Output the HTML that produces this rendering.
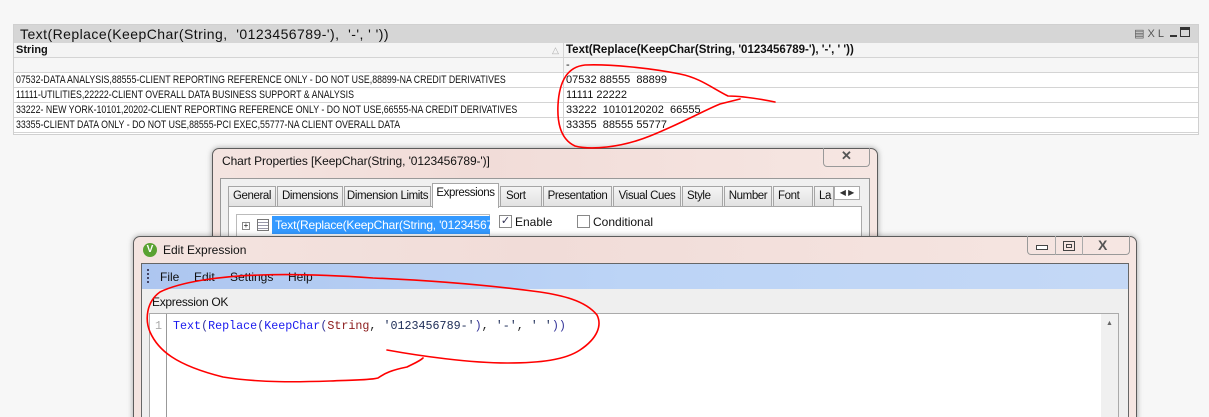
<!DOCTYPE html>
<html><head><meta charset="utf-8"><style>
*{box-sizing:border-box;margin:0;padding:0}
html,body{width:1209px;height:417px;overflow:hidden}
body{background:#f7f7f7;position:relative;font-family:"Liberation Sans",sans-serif;color:#111}
.a{position:absolute}
.tbl{left:13px;top:24px;width:1186px;height:111px;background:#fff;border:1px solid #d0d0d0}
.tt{left:0;top:0;width:100%;height:18px;background:#d6d6d6;font-size:14px;padding:1px 6px;letter-spacing:0.45px;white-space:nowrap}
.row{position:absolute;left:0;width:100%;height:15px;border-bottom:1px solid #d4d4d4;font-size:11px;line-height:15px}
.c1{position:absolute;left:2px;width:676px;white-space:nowrap;overflow:hidden;text-overflow:ellipsis;transform:scaleX(0.8);transform-origin:0 0}
.c2{position:absolute;left:552px;white-space:nowrap}
.dv{position:absolute;left:549px;top:18px;width:1px;height:92px;background:#d4d4d4}
.win{border:1px solid #5c5c5c;border-radius:7px 7px 0 0;background:linear-gradient(90deg,#f4e4e0,#f1dcd8 40%,#f6e6e2);box-shadow:0 0 6px rgba(0,0,0,.35)}
.tab{position:absolute;top:186px;height:21px;border:1px solid #a6a6a6;background:linear-gradient(#f5f5f5,#e2e2e2);font-size:11.5px;letter-spacing:-0.4px;line-height:19px;text-align:center;color:#111;white-space:nowrap;overflow:hidden}
.mono{font-family:"Liberation Mono",monospace;font-size:11.7px}
</style></head><body>

<div class="a tbl">
 <div class="a tt">Text(Replace(KeepChar(String,&nbsp; '0123456789-'),&nbsp; '-', ' '))</div>
 <div class="a" style="right:8px;top:2px;font-size:11px;color:#555;letter-spacing:3px">&#9636;XL<span style="display:inline-block;width:7px;border-bottom:2px solid #333;height:9px;margin:0 3px"></span><span style="display:inline-block;width:10px;height:10px;border:1px solid #333;border-top-width:3px"></span></div>
 <div class="row" style="top:18px;background:#f4f4f4;font-weight:bold"><span class="c1" style="transform:none">String</span><span style="position:absolute;left:538px;color:#aaa;font-weight:normal;font-size:9px">&#9651;</span><span class="c2" style="font-size:11.5px">Text(Replace(KeepChar(String, '0123456789-'), '-', ' '))</span></div>
 <div class="row" style="top:33px;background:#f6f6f6"><span class="c2">-</span></div>
 <div class="row" style="top:48px"><span class="c1">07532-DATA ANALYSIS,88555-CLIENT REPORTING REFERENCE ONLY - DO NOT USE,88899-NA CREDIT DERIVATIVES</span><span class="c2">07532 88555&nbsp; 88899</span></div>
 <div class="row" style="top:63px"><span class="c1">11111-UTILITIES,22222-CLIENT OVERALL DATA BUSINESS SUPPORT &amp; ANALYSIS</span><span class="c2">11111 22222</span></div>
 <div class="row" style="top:78px"><span class="c1">33222- NEW YORK-10101,20202-CLIENT REPORTING REFERENCE ONLY - DO NOT USE,66555-NA CREDIT DERIVATIVES</span><span class="c2">33222&nbsp; 1010120202&nbsp; 66555</span></div>
 <div class="row" style="top:93px"><span class="c1">33355-CLIENT DATA ONLY - DO NOT USE,88555-PCI EXEC,55777-NA CLIENT OVERALL DATA</span><span class="c2">33355&nbsp; 88555 55777</span></div>
 <div class="dv"></div>
</div>

<!-- Chart properties -->
<div class="a win" style="left:212px;top:148px;width:666px;height:100px"></div>
<div class="a" style="left:222px;top:154px;font-size:12px;letter-spacing:-0.1px">Chart Properties [KeepChar(String, '0123456789-')]</div>
<div class="a" style="left:823px;top:148px;width:47px;height:19px;border:1px solid #999;border-top:none;border-radius:0 0 4px 4px;font-size:13px;text-align:center;color:#555;font-weight:bold">&#10005;</div>
<div class="a" style="left:220px;top:178px;width:650px;height:70px;background:#f0f0f0;border:1px solid #999"></div>
<div class="a" style="left:228px;top:206px;width:634px;height:40px;background:#fff;border:1px solid #aaa"></div>
<div class="tab" style="left:228px;width:48px">General</div>
<div class="tab" style="left:277px;width:66px">Dimensions</div>
<div class="tab" style="left:344px;width:87px">Dimension Limits</div>
<div class="tab" style="left:432px;width:67px;top:183px;height:25px;background:#fff;border-bottom:none">Expressions</div>
<div class="tab" style="left:500px;width:42px;text-align:left;padding-left:5px">Sort</div>
<div class="tab" style="left:543px;width:69px">Presentation</div>
<div class="tab" style="left:613px;width:68px">Visual Cues</div>
<div class="tab" style="left:682px;width:41px;text-align:left;padding-left:4px">Style</div>
<div class="tab" style="left:724px;width:48px">Number</div>
<div class="tab" style="left:773px;width:40px;text-align:left;padding-left:4px">Font</div>
<div class="tab" style="left:814px;width:20px;text-align:left;padding-left:4px">La</div>
<div class="a" style="left:834px;top:186px;width:26px;height:14px;border:1px solid #aaa;background:#fff;font-size:8px;line-height:12px;text-align:center;color:#333">&#9664;&nbsp;&#9654;</div>
<div class="a" style="left:236px;top:214px;width:254px;height:30px;border:1px solid #bbb;background:#fff"></div>
<div class="a" style="left:242px;top:222px;width:8px;height:8px;border:1px solid #888;font-size:8px;line-height:6px;text-align:center">+</div>
<div class="a" style="left:257px;top:219px;width:12px;height:12px;border:1px solid #777;background:repeating-linear-gradient(#fff 0 2px,#99a 2px 3px)"></div>
<div class="a" style="left:272px;top:216px;width:218px;height:18px;background:#3399ff;color:#fff;font-size:12px;letter-spacing:-0.2px;line-height:18px;padding-left:3px;white-space:nowrap;overflow:hidden">Text(Replace(KeepChar(String, '0123456789</div>
<div class="a" style="left:499px;top:215px;width:13px;height:13px;border:1px solid #888;background:#fff;font-size:11px;line-height:11px;text-align:center;color:#335">&#10003;</div>
<div class="a" style="left:515px;top:215px;font-size:12px">Enable</div>
<div class="a" style="left:577px;top:215px;width:13px;height:13px;border:1px solid #888;background:#fff"></div>
<div class="a" style="left:593px;top:215px;font-size:12px">Conditional</div>

<!-- Edit Expression -->
<div class="a win" style="left:133px;top:236px;width:1004px;height:190px"></div>
<div class="a" style="left:143px;top:243px;width:14px;height:14px;border-radius:50%;background:#5aa232;color:#fff;font-size:10px;font-weight:bold;text-align:center;line-height:14px">V</div>
<div class="a" style="left:163px;top:243px;font-size:12px">Edit Expression</div>
<div class="a" style="left:1027px;top:236px;width:103px;height:19px;border:1px solid #999;border-top:none;border-radius:0 0 4px 4px"></div>
<div class="a" style="left:1055px;top:236px;width:1px;height:19px;background:#aaa"></div>
<div class="a" style="left:1082px;top:236px;width:1px;height:19px;background:#aaa"></div>
<div class="a" style="left:1036px;top:245px;width:12px;height:5px;border:1px solid #444;background:#fff"></div>
<div class="a" style="left:1063px;top:241px;width:12px;height:10px;border:1px solid #444"><div style="margin:2px;height:4px;border:1px solid #444"></div></div>
<div class="a" style="left:1098px;top:237px;font-size:14px;font-weight:bold;color:#555">X</div>
<div class="a" style="left:141px;top:263px;width:988px;height:160px;background:#efefef;border:1px solid #666"></div>
<div class="a" style="left:142px;top:264px;width:986px;height:25px;background:linear-gradient(90deg,#adc6f0,#bcd4f6 50%,#c4d8f6)"></div>
<div class="a" style="left:147px;top:269px;width:2px;height:14px;background:repeating-linear-gradient(#446 0 2px,transparent 2px 4px)"></div>
<div class="a" style="left:160px;top:270px;font-size:12px">File</div>
<div class="a" style="left:194px;top:270px;font-size:12px">Edit</div>
<div class="a" style="left:230px;top:270px;font-size:12px">Settings</div>
<div class="a" style="left:288px;top:270px;font-size:12px">Help</div>
<div class="a" style="left:152px;top:295px;font-size:12px;letter-spacing:-0.3px">Expression OK</div>
<div class="a" style="left:149px;top:313px;width:970px;height:110px;background:#fff;border:1px solid #aaa"></div>
<div class="a" style="left:166px;top:314px;width:1px;height:110px;background:#999"></div>
<div class="a mono" style="left:155px;top:319px;color:#aaa">1</div>
<div class="a" style="left:1101px;top:314px;width:17px;height:110px;background:#f0f0f0;font-size:7px;color:#666;text-align:center;padding-top:6px">&#9650;</div>
<div class="a mono" style="left:173px;top:319px;white-space:pre;color:#1a1aee"><span>Text</span><span style="color:#333399">(</span>Replace<span style="color:#333399">(</span>KeepChar<span style="color:#333399">(</span><span style="color:#8b1a1a">String</span><span style="color:#222">, </span><span style="color:#1a2a55">'0123456789-'</span><span style="color:#333399">)</span><span style="color:#222">, </span><span style="color:#1a2a55">'-'</span><span style="color:#222">, </span><span style="color:#1a2a55">' '</span><span style="color:#333399">))</span></div>

<svg class="a" style="left:0;top:0" width="1209" height="417" fill="none" stroke="#f00" stroke-width="1.6" stroke-linecap="round" stroke-linejoin="round">
<path d="M775,102 C755,98 738,96 728,96 C712,88 700,78 680,74 C650,68 610,64 585,65 C565,67 559,85 558,105 C557,125 562,140 575,146 C590,150 620,148 650,136 C680,124 705,110 720,104 L740,99"/>
<path d="M387,350 C420,356 470,363 507,363 C540,363 565,360 580,350 C598,338 602,325 597,315 C585,300 560,295 540,292 C480,284 420,280 373,278 C330,275 290,274 260,275 C220,276 180,282 160,292 C146,302 145,320 150,332 C158,350 175,365 223,377 C260,383 300,382 330,381 C355,380 370,380 378,378 C385,373 392,370 407,367 C415,363 420,361 423,358"/>
</svg>
</body></html>
